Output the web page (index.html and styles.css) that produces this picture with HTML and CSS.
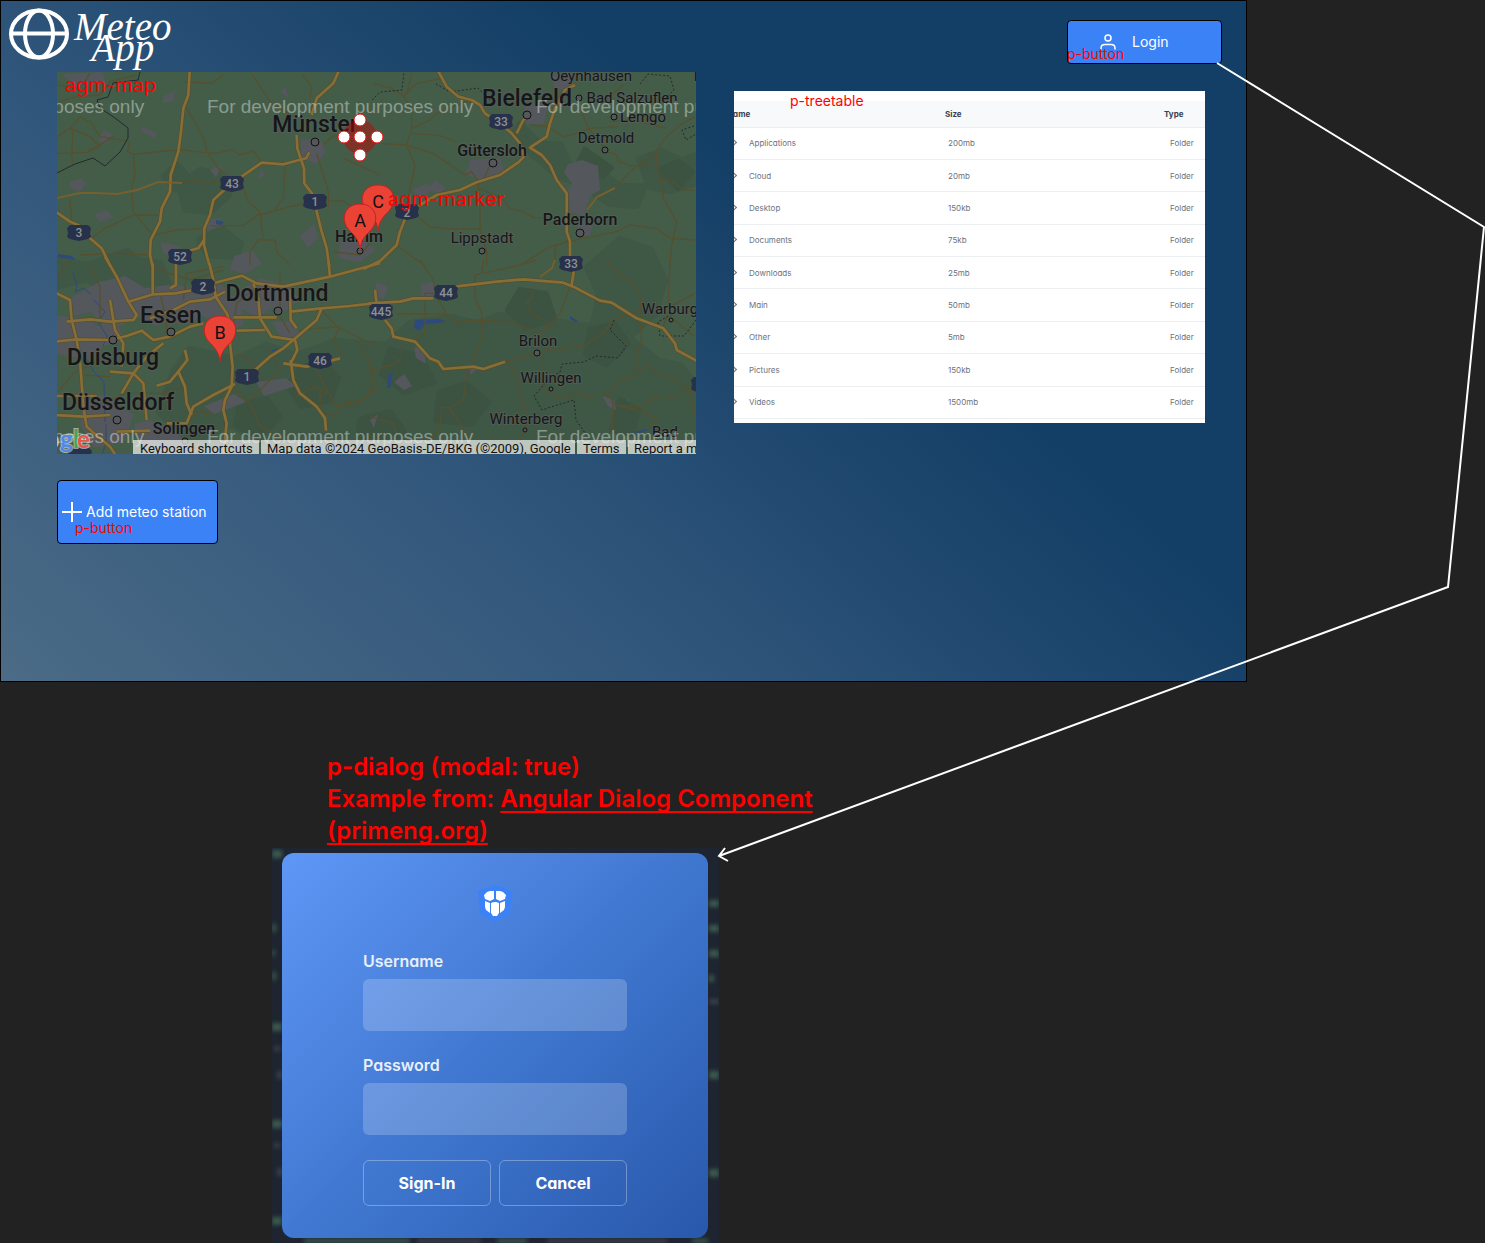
FILE: index.html
```
<!DOCTYPE html>
<html lang="en">
<head>
<meta charset="utf-8">
<meta name="viewport" content="width=device-width, initial-scale=1">
<title>Meteo App</title>
<link rel="stylesheet" href="styles.css">
</head>
<body>
<div class="board">
  <main class="app">
    <header class="topbar">
      <div class="brand">
        <svg class="globe" viewBox="0 0 60 52" aria-hidden="true"><g fill="none" stroke="#fff" stroke-width="4"><ellipse cx="30" cy="26" rx="28" ry="23.500"/><ellipse cx="30" cy="26" rx="14" ry="23.500"/><path d="M2 25.500H58"/></g></svg>
        <h1 class="brand-name">Meteo<br>App</h1>
      </div>
      <button class="btn btn-login" type="button">
        <svg class="icon-user" viewBox="0 0 16 16" aria-hidden="true"><g fill="none" stroke="#fff" stroke-width="1.500" stroke-linecap="round"><circle cx="8" cy="4" r="3"/><path d="M1 15v-1q0-3.500 4-3.500h6q4 0 4 3.500v1"/></g></svg>
        <span>Login</span>
        <span class="note note-login">p-button</span>
      </button>
    </header>

    <div class="content">
      <svg class="map" viewBox="57 72 639 382" role="img" aria-label="Map of the meteo stations">
        <defs>
          <g id="highways">
            <g transform="translate(50 65) scale(.33333)">
              <path d="M420 0L415 90L400 130L393 200L385 260L362 330L360 380L335 430L330 470L302 525L300 570L308 605"/>
              <path d="M10 435L60 470L85 480L120 520L155 550L182 605M870 10L850 55L800 100L785 150"/>
              <path d="M740 210L742 250L762 310L763 355L793 395L800 440L815 500L830 550L838 605"/>
              <path d="M778 262L768 280L700 298L635 293L545 355L490 405L480 450L463 490L462 540L478 600M462 525L445 550L390 565"/>
            </g>
            <g transform="translate(370 65) scale(.33333)">
              <path d="M200 10L230 65L265 95L305 105L330 120L345 145L390 175L425 205L450 235L462 275L445 292L390 330L320 352L270 375L200 390L150 420L110 450L90 500L80 540L30 588L-20 612"/>
              <path d="M615 60L585 75L555 130L540 175L530 215L480 248L515 270L540 300L560 345L590 385L590 500L600 530L600 590"/>
              <path d="M440 205L460 165L480 150"/>
            </g>
            <g transform="translate(50 260) scale(.33333)">
              <path d="M10 95L60 120L65 180L80 240L90 300L100 440L110 500L180 560L200 590M165 -10L200 50L235 125L260 165L250 180L180 185L120 178L50 185"/>
              <path d="M235 125L310 103L375 100L430 90M308 10L308 100M378 10L378 75L360 85M478 10L490 60L497 110L530 160L550 210L540 250L548 320L545 380L525 420L520 450L530 490L520 590"/>
              <path d="M490 70L575 47L620 70L700 80L840 50L990 10M525 95L480 118L420 125L370 150L300 175M550 172L680 172M560 212L645 210"/>
              <path d="M15 245L80 238L180 240L230 228L275 212L310 240L360 230L420 200L460 190M610 70L625 115L630 175L665 230L735 240L742 270L725 305"/>
              <path d="M720 90L722 180L740 205M720 155L815 145L900 138L990 128M815 145L800 180L730 240L700 265L660 290L615 330M835 0L840 50"/>
              <path d="M722 300L730 360L750 400L800 440L825 475L828 512M700 310L770 320L870 295M555 372L490 405L430 440L410 490L350 490M15 408L140 408M15 465L100 470L180 465"/>
              <path d="M180 335L250 340L280 370L290 480M340 250L290 290L250 340L215 400M405 270L412 300L385 335L405 380L410 430L425 465M385 335L360 365L320 377M180 120L190 180L195 210L220 250L215 320M200 515L300 512"/>
            </g>
            <g transform="translate(370 260) scale(.33333)">
              <path d="M-5 130L90 125L130 115L190 115M255 80L380 65L460 58L580 68L610 80L690 122L725 128L800 175L880 205L915 250L920 270L985 305M612 30L605 75M15 90L20 130"/>
              <path d="M45 180L65 205L70 230L135 245L180 295L205 305L220 327L310 320L340 327L405 305"/>
            </g>
          </g>
          <path id="shield" d="M-9-8H9L12-5L11 0L12 4L9 6L0 8L-9 6L-12 4L-11 0L-12-5Z"/>
          <path id="pin" d="M0 30C-1 20-5 16-11 10C-20 0-16-16 0-16S20 0 11 10C5 16 1 20 0 30Z"/>
        </defs>

        <rect class="land" x="57" y="72" width="639" height="382"/>

        <g class="forest">
          <path d="M180 185l20-14 18 4 10 20-18 16-24-2zM200 240l22-10 18 14-4 12-28-2zM165 176l12-10 8 8-10 14z"/>
          <path d="M57 260l30 6 40-14 20 16-10 20-30 4-20-14-30 8zM130 260l30 4 10 26-20 12-14-18z"/>
          <path d="M520 125l20 20 20 0 10 22 30 6 20 14 24 0-8 18-26-2-30-20-22-8-24-20-18-24zM640 160l22-8 20 10 14-6v26l-26 8-20-4z"/>
          <path d="M190 350l46 10 30-14 30 10 40-14 50 4 24-22 40-6 26 6 24-8 42 4 36 6 36 2 40 30-10 30-24 10-10 30-30 26H370l-60-20-40 10-40-20-40 18-30-30 14-40z"/>
          <path d="M620 240l30 10 14 30-10 34-34 30-28-10 8-40-12-26zM650 360l30 6 16 20v60h-50l-14-40z"/>
        </g>
        <g class="forest-dark">
          <path d="M300 368l22-6 16 16-8 22-28 6-14-20zM390 350l30 6 14 26-30 10-22-18zM440 392l26-8 22 18-16 22-36-4zM520 290l26 4 8 24-28 10-18-18zM590 330l24-6 14 20-22 20-20-10zM240 405l26-6 14 18-22 20-22-12zM585 150l26 18-8 8-24-14zM660 170l18-8 14 10-14 16zM360 420l30-8 14 20-20 16-26-6zM620 400l18 10-6 24-20-4z"/>
        </g>

        <g class="urban">
          <path d="M568 164l14-4 16 6 2 24-10 6-6 20-14-4-2-22 4-6-8-12z"/>
          <path d="M99 282l26-6 20 12 30-4 20 6 26-6 10 10-6 14 10 4-18 10-16-6-14 8-20-2-12 4-18-10-16 10-18 0-12-14-16 4-8-16zM240 290l20-12 30 8 10 14-16 12-12-4-14 10-18-10zM234 256l18-6 10 14-16 10-16-4z"/>
          <path d="M57 316l30 2 10 8 22-2 4 18-20 4-12 14-34-6zM84 394l26 2 10 12 14 6-10 28-30 6-14-24zM134 424l16-4 28 10 6 16-36 2-12-14zM204 406l30-12 12 8-32 12z"/>
          <path d="M300 140l20-2 6 14-10 12-14-6zM470 160l30-2 6 16-20 8-20-8zM524 104l24 0-4 20-18 0zM70 182l12-4 4 6-6 8-10-4zM205 220l14-2 4 8-16 4zM550 76l24-4-2 16-16 2zM340 242l24-2 12 10-16 12-22-4zM436 180l10 8-8 6-10-6zM578 220l16 2-4 14-14-2zM420 285l14-4 0 14-12 2zM412 190l14-6 8 4-14 12zM62 74l40-2 4 10-30 6zM210 170l12-6-6 14zM163 96l12-5-2 10-10 2zM143 126l14 8-2 4-14-6zM104 130l8 4-6 10-8-4zM300 236l14-12 4 14-10 10zM376 282l12 4-4 14-10-6zM95 214l12-4 6 8-14 4zM394 382l10-8 8 12-8 4zM414 346l10 4 2 14-10-6zM602 396l12 4 2 10-8-4zM260 170l6 4-8 6zM280 92l6-6 2 12zM370 420l8-6-4 14zM470 365l8 4-8 6zM160 242l20 4-2 10-14-2zM256 382l30-4 10 8-32 10zM220 300l20-6 4 30-20 10zM272 322l20 0 10 14-20 4z"/>
        </g>

        <g class="water">
          <path d="M415 320l26-1 4 3-18 2-8 6-5-2zM388 376l6-4-2 4-2 12h-3zM570 316l8 5-2 1-6-3zM216 220l8 2-2 3-6-1zM58 254l14 2 4 4-18-3zM630 432l20-3-10 4zM272 350l10-2-10 4z"/>
        </g>
        <path class="river" d="M73 272l4 14-2 6 8-4 8 6M94 300l11 12-7 10 9 14-4 10M86 358l8 14 10 10 1 40M106 424v20l-4 10"/>

        <g class="roads">
          <g transform="translate(50 65) scale(.33333)">
            <path d="M22 215L60 190L90 155L125 175L150 215L240 230M65 185L68 215L65 270L70 300M22 265L110 262L190 215M60 190L120 215L150 245L110 262"/>
            <path d="M240 230L232 260L250 268L340 258L400 255L460 262L500 265L545 253L568 270L610 258L635 290M410 130L440 180L465 230L470 260L505 310L540 340M250 265L255 330L245 370L250 440L290 490L310 510"/>
            <path d="M395 354L430 345L470 357L510 350M580 370L595 410L630 440L635 490L640 520M480 482L580 482L630 445M310 510L380 495L460 490M60 400L65 470M125 520L165 490L250 450L325 450"/>
            <path d="M705 305L700 400L670 440M630 450L720 425L770 415M800 265L820 330L835 380L835 430M835 408L880 408L950 450M820 240L850 212M400 50L485 55L520 30M605 25L640 80L665 115L740 160M755 25L785 65L780 100"/>
            <path d="M600 600L600 560L625 525L675 525L680 560L720 600M22 60L90 70L120 25M30 110L80 95L150 90L180 50L260 30M880 280L990 330M850 212L990 235M850 560L930 570L990 500M90 570L200 565L300 570"/>
          </g>
          <g transform="translate(370 65) scale(.33333)">
            <path d="M10 55L65 70L100 92L140 55L215 40M100 92L125 130L125 190L110 240L135 300L120 370L110 430M35 235L105 240L190 265L285 330L305 320L325 350L330 430L330 490M125 205L210 212L255 230M125 190L180 165L200 145L300 105"/>
            <path d="M340 345L360 300M330 370L400 405L420 430L460 440L490 458L520 458M150 460L180 485L240 492L330 492L350 560L350 600M80 540L140 585L165 600M460 595L540 545L640 520L740 500L780 480L860 490L900 520L975 525"/>
            <path d="M480 180L530 185L580 215L620 205L660 190L745 185M630 130L655 190L690 230L710 260L740 270L745 290L780 302L860 300L860 255L890 215L930 180L975 155M650 435L680 395L735 370L780 320L860 260M860 300L870 340L910 350L940 375L975 375M870 340L880 400L920 470L905 540L900 600M555 600L555 545L600 525M125 25L110 90M720 170L790 165L890 190M760 60L700 110"/>
          </g>
          <g transform="translate(50 260) scale(.33333)">
            <path d="M22 50L60 0M25 395L70 340L150 300M100 345L180 350M400 500L440 455L490 460M550 380L600 430L630 500L700 540M640 360L600 300L560 280M660 270L690 330L600 420M740 410L800 380L830 400M800 330L830 390L860 440L920 430L990 380M870 200L850 240L880 290M815 150L860 200L940 240L990 260M750 210L860 200M920 240L960 300L970 380L940 420L880 430L850 470L810 455L810 390M120 20L150 80L150 180M330 100L350 180L350 220M620 80L560 130L550 200M690 40L690 170L720 220M300 20L420 60L520 30M400 120L410 40L520 20M130 440L230 400L330 400L400 380"/>
          </g>
          <g transform="translate(370 260) scale(.33333)">
            <path d="M340 0L335 40L315 45L315 110L335 160L340 230L320 270L305 315L290 350L280 420L240 445L275 500L300 540M80 162L230 162L260 188L300 180L420 185L470 205L510 220L530 210L570 160L600 80M480 90L490 110L470 130L490 165L525 180L530 210"/>
            <path d="M405 305L430 300L480 285L540 270L640 258L690 225L740 175L810 150M410 310L440 345L450 400L465 450L470 500L450 540M515 290L515 370L540 405L590 415L600 400L650 410L715 403L730 430L725 540M715 403L750 360L795 348L800 290L815 240L810 190M795 330L815 330L835 318L870 345L910 355L950 385L975 390"/>
            <path d="M950 390L900 415L860 410L815 440L735 435L800 450L860 475L850 500M150 0L190 60L195 100L165 100L165 220L120 250M230 162L200 110M340 40L450 15L500 0M510 50L545 25L555 0M710 0L740 40L790 70L810 110L815 170M900 0L895 130M975 100L900 140L880 200M900 170L975 230M95 250L95 290L70 315L0 330L10 370L0 400M0 470L70 490L80 520M240 445L215 440L210 500L180 540M960 390L975 470"/>
          </g>
        </g>
        <g class="country">
          <path d="M140 72L138 80L130 81L113 83L108 97L97 100L100 108L115 118L128 128L128 138L120 152L105 166L93 158L75 164L57 173"/>
          <path class="dashed" d="M372 100L380 92L402 90L404 72M436 84L450 92L478 88L490 100M640 84L648 74L670 76L674 90L660 104M694 126L682 130L686 140L696 134M614 320L610 330L626 346L618 358L596 356L584 362L562 364L560 372L548 380L534 396L542 410L554 406L574 400L576 420L590 440M696 320L684 336L660 336L658 322L672 314"/>
        </g>

        <use class="casing" href="#highways"/>
        <use class="paving" href="#highways"/>
        <path class="trunk" d="M57 198L80 193L97 193L117 194L137 190L158 182L182 183M587 210L597 197L615 188M540 277L552 268L555 260"/>

        <g class="shields">
          <use href="#shield" x="232" y="184"/><use href="#shield" x="315" y="202"/><use href="#shield" x="79" y="233"/><use href="#shield" x="180" y="257"/><use href="#shield" x="501" y="122"/><use href="#shield" x="407" y="212"/><use href="#shield" x="571" y="264"/><use href="#shield" x="203" y="287"/><use href="#shield" x="320" y="361"/><use href="#shield" x="247" y="377"/><use href="#shield" x="446" y="293"/><use href="#shield" x="381" y="312"/><use href="#shield" x="703" y="385"/><use href="#shield" x="80" y="456"/>
        </g>
        <g class="shield-text">
          <text x="232" y="188">43</text><text x="315" y="206">1</text><text x="79" y="237">3</text><text x="180" y="261">52</text><text x="501" y="126">33</text><text x="407" y="217">2</text><text x="571" y="268">33</text><text x="203" y="291">2</text><text x="320" y="365">46</text><text x="247" y="381">1</text><text x="446" y="297">44</text><text x="381" y="316">445</text>
        </g>

        <g class="towns">
          <circle cx="315" cy="142" r="4"/><circle cx="527" cy="115" r="4"/><circle cx="493" cy="163" r="4"/><circle cx="579" cy="98" r="3"/><circle cx="614" cy="117" r="3"/><circle cx="605" cy="150" r="3"/><circle cx="580" cy="233" r="4"/><circle cx="482" cy="251" r="3"/><circle cx="360" cy="251" r="3"/><circle cx="278" cy="311" r="4"/><circle cx="171" cy="332" r="4"/><circle cx="113" cy="340" r="4"/><circle cx="117" cy="420" r="4"/><circle cx="185" cy="441" r="3"/><circle cx="537" cy="353" r="3"/><circle cx="551" cy="389" r="2"/><circle cx="525" cy="430" r="2"/><circle cx="671" cy="320" r="2"/>
        </g>
        <g class="label label-lg">
          <text x="315" y="132">Münster</text><text x="527" y="106">Bielefeld</text><text x="277" y="301">Dortmund</text><text x="171" y="323">Essen</text><text x="113" y="365">Duisburg</text><text x="118" y="410">Düsseldorf</text>
        </g>
        <g class="label label-md">
          <text x="492" y="156">Gütersloh</text><text x="580" y="225">Paderborn</text><text x="359" y="242">Hamm</text><text x="184" y="434">Solingen</text>
        </g>
        <g class="label label-sm">
          <text x="591" y="81">Oeynhausen</text><text x="632" y="103">Bad Salzuflen</text><text x="643" y="122">Lemgo</text><text x="606" y="143">Detmold</text><text x="482" y="243">Lippstadt</text><text x="670" y="314">Warburg</text><text x="538" y="346">Brilon</text><text x="551" y="383">Willingen</text><text x="526" y="424">Winterberg</text><text x="665" y="437">Bad</text><text x="699" y="81">H</text>
        </g>

        <g class="watermark">
          <text x="-122" y="113">For development purposes only</text><text x="207" y="113">For development purposes only</text><text x="536" y="113">For development purposes only</text>
          <text x="-122" y="443">For development purposes only</text><text x="207" y="443">For development purposes only</text><text x="536" y="443">For development purposes only</text>
        </g>

        <g class="google"><text x="45" y="448" fill="#f2b90c">o</text><text x="60" y="448" fill="#5287ec">g</text><text x="73" y="448" fill="#3fa757">l</text><text x="77" y="448" fill="#e2584c">e</text></g>

        <path class="legal-bg" d="M133 440H259V454H133ZM261 440H575V454H261ZM577 440H626V454H577ZM628 440H696V454H628Z"/>
        <g class="legal"><text x="140" y="453">Keyboard shortcuts</text><text x="267" y="453">Map data ©2024 GeoBasis-DE/BKG (©2009), Google</text><text x="583" y="453">Terms</text><text x="634" y="453">Report a map error</text></g>

        <circle class="area" cx="360" cy="137" r="17"/>
        <g class="handles"><circle cx="360" cy="120" r="6"/><circle cx="344" cy="137" r="6"/><circle cx="360" cy="137" r="6"/><circle cx="377" cy="137" r="6"/><circle cx="360" cy="155" r="6"/></g>

        <g class="pins"><use href="#pin" x="378" y="201"/><use href="#pin" x="360" y="220"/><use href="#pin" x="220" y="332"/></g>
        <g class="pin-text"><text x="378" y="208">C</text><text x="360" y="227">A</text><text x="220" y="339">B</text></g>

        <g class="map-notes"><text x="65" y="92">agm-map</text><text x="388" y="206">agm-marker</text></g>
      </svg>

      <section class="files">
        <span class="note note-table">p-treetable</span>
        <table>
          <colgroup><col class="col-name"><col class="col-size"><col></colgroup>
          <thead><tr><th scope="col">Name</th><th scope="col">Size</th><th scope="col">Type</th></tr></thead>
          <tbody>
            <tr><td>Applications</td><td>200mb</td><td>Folder</td></tr>
            <tr><td>Cloud</td><td>20mb</td><td>Folder</td></tr>
            <tr><td>Desktop</td><td>150kb</td><td>Folder</td></tr>
            <tr><td>Documents</td><td>75kb</td><td>Folder</td></tr>
            <tr><td>Downloads</td><td>25mb</td><td>Folder</td></tr>
            <tr><td>Main</td><td>50mb</td><td>Folder</td></tr>
            <tr><td>Other</td><td>5mb</td><td>Folder</td></tr>
            <tr><td>Pictures</td><td>150kb</td><td>Folder</td></tr>
            <tr><td>Videos</td><td>1500mb</td><td>Folder</td></tr>
          </tbody>
        </table>
      </section>
    </div>

    <button class="btn btn-add" type="button">
      <svg class="icon-plus" viewBox="0 0 20 20" aria-hidden="true"><path d="M10 0V20M0 10H20" stroke="#fff" stroke-width="2"/></svg>
      <span>Add meteo station</span>
      <span class="note note-add">p-button</span>
    </button>
  </main>

  <section class="dialog-area">
    <p class="dialog-note">p-dialog (modal: true)<br>Example from: <a href="https://primeng.org/dialog">Angular Dialog Component (primeng.org)</a></p>
    <div class="backdrop">
      <svg class="backdrop-blur" viewBox="0 0 447 395" aria-hidden="true">
        <g fill="#3d5a50"><path d="M0 2h10v8H0zM0 76h4v8H0zM0 102h3v6H0zM0 124h4v8H0zM0 175h10v8H0zM0 272h10v8H0zM0 369h10v8H0zM437 52h10v7h-10zM437 77h10v7h-10zM437 102h10v7h-10zM437 127h5v7h-5zM437 223h10v8h-10zM437 321h10v8h-10zM32 391h106v4H32zM225 391h30v4h-30zM420 391h16v4h-16z"/></g>
        <g fill="#3c4049"><path d="M2 198h6v5H2zM5 223h5v8H5zM2 295h6v5H2zM5 320h5v8H5zM437 151h10v5h-10zM145 391h64v4h-64zM275 391h120v4H275z"/></g>
      </svg>
      <form class="dialog">
        <svg class="prime" viewBox="0 0 34 37" aria-hidden="true"><path fill="#3b82f6" d="M17 0L34 6L32 29L17 37L2 29L0 6Z"/><g fill="#fff"><path d="M9 7l3-1h4v8l-4 2-5-2-1-4zM25 7l-3-1h-4v8l4 2 5-2 1-4z"/><path d="M7 16l5 2v10l-4-3-1-3zM27 16l-5 2v10l4-3 1-3z"/><path d="M13 18q4-2 8 0v10l-2 3h-4l-2-3z"/></g></svg>
        <div class="field"><label for="username">Username</label><input id="username" type="text"></div>
        <div class="field"><label for="password">Password</label><input id="password" type="password"></div>
        <div class="actions"><button type="button">Sign-In</button><button type="button">Cancel</button></div>
      </form>
    </div>
  </section>

  <svg class="connector" viewBox="0 0 768 870" aria-hidden="true"><path d="M500 63L767 227L731 587L2 856M8 848L2 856L11 861" fill="none" stroke="#fff" stroke-width="2"/></svg>
</div>
</body>
</html>
```
FILE: styles.css
```
* { box-sizing: border-box; }

body {
  margin: 0;
  background: #222;
  font-family: Inter, "Liberation Sans", sans-serif;
}

.board { position: relative; overflow: hidden; }

/* application frame */
.app {
  width: calc(100% - 238px);
  padding-bottom: 137px;
  border: 1px solid #000;
  background: linear-gradient(41deg, #4b6b86 0%, #32577c 33%, #133e65 66%, #133e65 100%);
}

.topbar {
  display: flex;
  justify-content: space-between;
  align-items: flex-start;
  height: 71px;
  padding: 7px 24px 0 8px;
}

.brand { display: flex; align-items: flex-start; gap: 5px; }
.globe { width: 60px; height: 52px; }
.brand-name {
  margin: 8px 0 0;
  color: #fff;
  font: italic 400 39px/21px "Liberation Serif", serif;
  text-align: center;
}

.btn {
  position: relative;
  display: flex;
  align-items: center;
  border: 1px solid #000;
  border-radius: 4px;
  background: #3b82f6;
  color: #fff;
  font: 400 14px/20px Inter, sans-serif;
}
.btn-login { width: 155px; height: 44px; margin-top: 12px; padding: 0 32px; gap: 16px; }
.icon-user { width: 16px; height: 16px; }
.btn-add { width: 161px; height: 64px; margin: 26px 0 0 56px; padding: 0 4px; gap: 4px; white-space: nowrap; }
.icon-plus { width: 20px; height: 20px; flex: none; }

.note { position: absolute; color: #f00; font: 400 14px/16px Inter, sans-serif; }
.note-login { left: -1px; bottom: 1px; }
.note-add { left: 17px; bottom: 7px; }
.note-table { left: 56px; top: 2px; }

.content {
  display: grid;
  grid-template-columns: 639fr 471fr;
  align-items: start;
  gap: 38px;
  padding: 0 41px 0 56px;
}

/* map */
.map { display: block; width: 100%; height: auto; overflow: hidden; font-family: Roboto, sans-serif; }
.land { fill: #445d49; }
.forest { fill: #3f5745; stroke: #3f5745; stroke-width: 8; stroke-linejoin: round; }
.forest-dark { fill: #3c5342; stroke: #3c5342; stroke-width: 6; stroke-linejoin: round; }
.urban { fill: #54575b; }
.water { fill: #2d4a7c; }
.river { fill: none; stroke: #2d4a7c; stroke-width: 1; }
.roads { fill: none; stroke: #56502f; stroke-width: 4; stroke-linejoin: round; }
.country { fill: none; stroke: #24292b; stroke-width: 1; }
.dashed { stroke-dasharray: 2 2; }
.casing { fill: none; stroke: #574d2c; stroke-width: 12; stroke-linejoin: round; }
.paving { fill: none; stroke: #866e36; stroke-width: 8; stroke-linejoin: round; }
.trunk { fill: none; stroke: #75602f; stroke-width: 2; }
.shields { fill: #27324a; }
.shield-text { fill: #8d9196; font-size: 12px; font-weight: 500; text-anchor: middle; }
.towns { fill: #55585b; stroke: #111; stroke-width: 1; }
.label { fill: #161616; stroke: #5b5f60; stroke-opacity: .6; stroke-width: 2; paint-order: stroke; font-weight: 500; text-anchor: middle; }
.label-lg { font-size: 23px; }
.label-md { font-size: 16px; }
.label-sm { font-size: 15px; font-weight: 400; }
.watermark { fill: #fff; fill-opacity: .4; font: 400 19px "Liberation Sans", sans-serif; }
.google { font: 700 24px Lato, sans-serif; stroke: #fff; stroke-opacity: .5; stroke-width: 2; paint-order: stroke; }
.legal-bg { fill: #f5f5f5; fill-opacity: .7; }
.legal { fill: #111; font-size: 13px; }
.area { fill: #c00000; fill-opacity: .45; }
.handles { fill: #fff; stroke: #e11; stroke-width: 1; }
.pins { fill: #ea4335; stroke: #c5221f; stroke-width: 1; }
.pin-text { fill: #111; font-size: 18px; text-anchor: middle; }
.map-notes { fill: #f00; font: 400 20px Inter, sans-serif; }

/* tree table */
.files {
  position: relative;
  overflow: hidden;
  margin-top: 19px;
  padding: 10px 0 4px;
  background: #fff;
}
.files table {
  width: 100%;
  height: 318px;
  border-collapse: collapse;
  table-layout: fixed;
  color: #6b7280;
  font-size: 8px;
  line-height: 12px;
  font-feature-settings: "cv11";
}
.col-name { width: 211px; }
.col-size { width: 219px; }
.files th, .files td { padding: 0; text-align: left; border-bottom: 1px solid #eceef0; }
.files thead tr { height: 26px; background: #f8f9fa; }
.files th { color: #374151; font-weight: 700; }
.files th:first-child { text-indent: -7px; }
.files td { padding-left: 3px; }
.files td:first-child { padding-left: 0; }
.files td:first-child::before {
  content: "";
  display: inline-block;
  width: 4px;
  height: 4px;
  margin: 0 13px 0 -3px;
  border: solid #6b7280;
  border-width: 1px 1px 0 0;
  transform: rotate(45deg);
  vertical-align: 1px;
}
.files td:last-child { padding-left: 6px; }

/* dialog */
.dialog-area { padding: 69px 0 0 272px; }
.dialog-note {
  max-width: 560px;
  margin: 0;
  padding: 0 0 1px 55px;
  color: #f00;
  font-size: 24px;
  font-weight: 600;
  line-height: 32px;
}
.dialog-note a { color: inherit; text-decoration-thickness: 2px; text-underline-offset: 4px; text-decoration-skip-ink: none; }
.backdrop {
  position: relative;
  max-width: 447px;
  padding: 5px 11px 5px 10px;
  background: #1e2530;
  overflow: hidden;
}
.backdrop-blur { position: absolute; left: 0; top: 0; width: 100%; filter: blur(2px); }
.dialog {
  position: relative;
  display: flex;
  flex-direction: column;
  padding: 32px 81px;
  border-radius: 12px;
  background: linear-gradient(135deg, #5f97f7 0%, #4179d2 48%, #2858ab 100%);
  font-feature-settings: "cv11";
}
.prime { width: 34px; height: 37px; margin: 0 auto 27px; }
.field { display: flex; flex-direction: column; gap: 6px; margin-bottom: 22px; }
.field label { color: #e8effc; font-size: 16px; font-weight: 600; line-height: 24px; }
.field input {
  width: 100%;
  height: 52px;
  padding: 0 16px;
  border: 0;
  border-radius: 6px;
  background: rgba(255, 255, 255, .2);
  color: #fff;
  font: inherit;
}
.actions { display: flex; gap: 8px; margin-top: 3px; }
.actions button {
  flex: 1;
  height: 46px;
  border: 1px solid rgba(255, 255, 255, .3);
  border-radius: 6px;
  background: none;
  color: #fff;
  font: 700 16px/24px Inter, sans-serif;
  font-feature-settings: "cv11";
}

/* arrow from the login button to its dialog */
.connector { position: absolute; top: 0; right: 0; width: 768px; height: 870px; pointer-events: none; }
```
